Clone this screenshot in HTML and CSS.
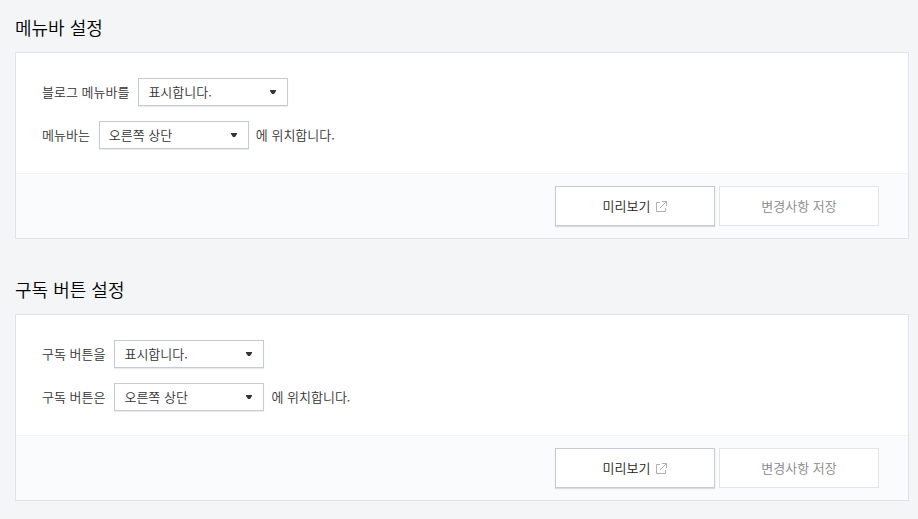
FILE: index.html
```html
<!DOCTYPE html>
<html lang="ko">
<head>
<meta charset="utf-8">
<meta name="viewport" content="width=device-width, initial-scale=1">
<title>메뉴바 설정</title>
<link rel="stylesheet" href="styles.css">
</head>
<body>
<main class="settings">
  <section class="section">
    <h2 class="section-title">메뉴바 설정</h2>
    <form class="panel">
      <div class="fields">
        <div class="field">
          <label for="menubar-show">블로그 메뉴바를</label>
          <select id="menubar-show" class="select"><option>표시합니다.</option><option>숨깁니다.</option></select>
        </div>
        <div class="field">
          <label for="menubar-position">메뉴바는</label>
          <select id="menubar-position" class="select"><option>오른쪽 상단</option><option>왼쪽 상단</option></select>
          <span>에 위치합니다.</span>
        </div>
      </div>
      <div class="actions">
        <button type="button" class="button">미리보기
          <svg class="icon" viewBox="0 0 11 11" aria-hidden="true"><path d="M4 1.5H.5v9h9V7M6 .5h4.500v4.500M10.500.5L4 7"/></svg>
        </button>
        <button type="submit" class="button" disabled>변경사항 저장</button>
      </div>
    </form>
  </section>
  <section class="section">
    <h2 class="section-title">구독 버튼 설정</h2>
    <form class="panel">
      <div class="fields">
        <div class="field">
          <label for="subscribe-show">구독 버튼을</label>
          <select id="subscribe-show" class="select"><option>표시합니다.</option><option>숨깁니다.</option></select>
        </div>
        <div class="field">
          <label for="subscribe-position">구독 버튼은</label>
          <select id="subscribe-position" class="select"><option>오른쪽 상단</option><option>왼쪽 상단</option></select>
          <span>에 위치합니다.</span>
        </div>
      </div>
      <div class="actions">
        <button type="button" class="button">미리보기
          <svg class="icon" viewBox="0 0 11 11" aria-hidden="true"><path d="M4 1.5H.5v9h9V7M6 .5h4.500v4.500M10.500.5L4 7"/></svg>
        </button>
        <button type="submit" class="button" disabled>변경사항 저장</button>
      </div>
    </form>
  </section>
</main>
</body>
</html>
```
FILE: styles.css
```css
* {
  box-sizing: border-box;
}

body {
  margin: 0;
  background: #f3f5f7;
  color: #333;
  font: 350 13px/20px "Noto Sans CJK KR DemiLight", "Noto Sans CJK KR", sans-serif;
}

.settings {
  display: flex;
  flex-direction: column;
  gap: 35px;
  padding: 12px 9px 18px 15px;
}

.section-title {
  margin: 0 0 10px;
  color: #000;
  font-size: 18px;
  font-weight: 350;
  line-height: 30px;
}

.panel {
  background: #fff;
  border: 1px solid #dfe3eb;
}

.fields {
  display: flex;
  flex-direction: column;
  gap: 15px;
  padding: 25px 26px 24px;
}

.field {
  display: flex;
  align-items: center;
  gap: 7px;
}

.field label {
  padding-right: 2px;
}

.select {
  appearance: none;
  width: 150px;
  height: 28px;
  padding: 0 28px 0 9px;
  border: 1px solid #c4cbd6;
  border-radius: 0;
  background: #fff url("data:image/svg+xml,%3Csvg xmlns='http://www.w3.org/2000/svg' width='6' height='4'%3E%3Cpath d='M0 0h6v1L4 4H2L0 1z' fill='%23333'/%3E%3C/svg%3E") no-repeat right 11px center;
  box-shadow: 0 1px 1px rgba(0, 0, 0, 0.08);
  color: #333;
  font: inherit;
}

.actions {
  display: flex;
  justify-content: flex-end;
  gap: 4px;
  padding: 12px 29px 12px;
  border-top: 1px solid #f0f2f4;
  background: #fafbfd;
}

.button {
  display: flex;
  align-items: center;
  justify-content: center;
  gap: 6px;
  width: 160px;
  height: 40px;
  padding: 0;
  border: 1px solid #c4cbd6;
  background: #fff;
  box-shadow: 0 1px 1px rgba(0, 0, 0, 0.12);
  color: #222;
  font: inherit;
}

.button:disabled {
  border-color: #e1e5eb;
  box-shadow: none;
  color: #888;
}

.icon {
  width: 11px;
  height: 11px;
  fill: none;
  stroke: #b0b0b0;
}
```
